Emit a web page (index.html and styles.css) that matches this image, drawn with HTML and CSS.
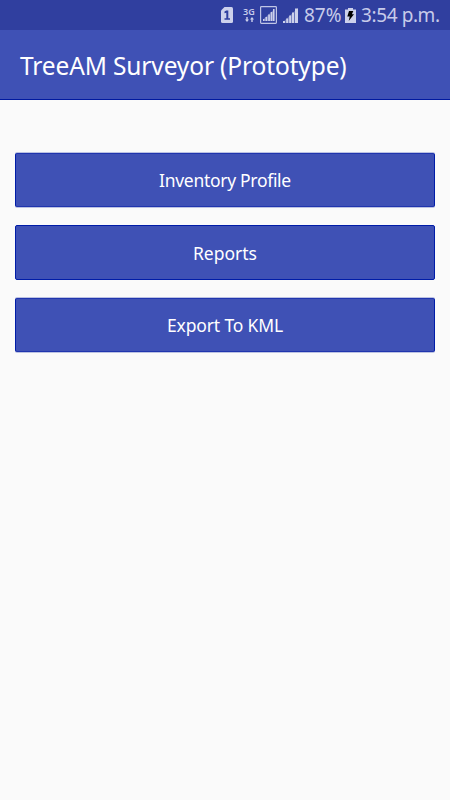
FILE: index.html
```
<!DOCTYPE html>
<html lang="en">
<head>
    <meta charset="UTF-8">
    <meta name="viewport" content="width=device-width, initial-scale=1.0">
    <title>TreeAM Surveyor</title>
    <link rel="stylesheet" href="styles.css">
</head>
<body>
    <div id="status-bar">
        <svg class="sim" width="12" height="16" viewBox="0 0 12 16">
            <path class="light" d="M3.5 0H10.5Q12 0 12 1.5V14.5Q12 16 10.5 16H1.5Q0 16 0 14.5V3.5Z"/>
            <path class="dark" d="M5.2 3.5H7.3V11.3H9V12.8H3.5V11.3H5.3V5.7L3.5 6.2V4.6Z"/>
        </svg>
        <div class="network">
            <span>3G</span>
            <svg width="9" height="6" viewBox="0 0 9 6">
                <path class="light" d="M1.3 0H2.7V2.5H4L2 5L0 2.5H1.3ZM6.3 5H7.7V2.5H9L7 0L5 2.5H6.3Z"/>
            </svg>
        </div>
        <svg class="signal-box" width="17" height="18" viewBox="0 0 17 18">
            <rect class="frame" x=".6" y=".6" width="15.8" height="16.8" rx=".8"/>
            <path class="light" d="M3 13H4.5V15H3ZM5.5 11H7.2V15H5.5ZM8.2 8.5H9.9V15H8.2ZM10.7 6H12.4V15H10.7ZM13 3H14.5V15H13Z"/>
            <path class="faint" d="M3 13.5L14.5 3V15H3Z"/>
        </svg>
        <svg class="signal" width="15" height="16" viewBox="0 0 15 16">
            <path class="light" d="M0 14H2V16H0ZM3.2 11.5H5.2V16H3.2ZM6.2 8.5H8.2V16H6.2ZM9 5.5H11V16H9ZM12 1.5H15V16H12Z"/>
            <path class="faint" d="M0 15L15 1V16H0Z"/>
        </svg>
        <span class="percent">87%</span>
        <svg class="battery" width="11" height="15" viewBox="0 0 11 15">
            <path class="cell" d="M3 0H8V1.5H11V15H0V1.5H3Z"/>
            <path class="bolt" d="M4 3H8.3L6.9 6.2H9L3.7 13L4.7 8.5H2.3Z"/>
        </svg>
        <span class="time">3:54 p.m.</span>
    </div>
    <div id="header">
        <h1>TreeAM Surveyor (Prototype)</h1>
    </div>
    <div id="menu">
        <button class="inventory"><span>Inventory Profile</span></button>
        <button class="reports"><span>Reports</span></button>
        <button class="export"><span>Export To KML</span></button>
    </div>
</body>
</html>
```
FILE: styles.css
```
body {
    font-family: "Noto Sans", sans-serif;
    margin: 0;
    height: 100vh;
    background-color: #fafafa;
    overflow: hidden;
}

#status-bar {
    display: flex;
    align-items: center;
    box-sizing: border-box;
    height: 30px;
    padding-left: 221px;
    background-color: #303f9f;
    color: #c7cbea;
    white-space: nowrap;
}

#status-bar svg {
    display: block;
    flex: none;
}

.light {
    fill: #cdd1ec;
}

.faint {
    fill: #cdd1ec;
    opacity: 0.35;
}

.dark {
    fill: #303f9f;
}

.frame {
    fill: none;
    stroke: #c0c5e6;
    stroke-width: 1.2;
}

.cell {
    fill: #cdd1ec;
}

.bolt {
    fill: #000;
}

.network {
    width: 12px;
    margin-left: 10px;
}

.network span {
    display: block;
    font-size: 9px;
    font-weight: 600;
    line-height: 8px;
}

.network svg {
    margin: 1px 0 0 2px;
}

.signal-box {
    margin-left: 5px;
}

.signal {
    margin-left: 6px;
}

.percent {
    width: 38px;
    margin-left: 6px;
    font-size: 19px;
    line-height: 28px;
}

.battery {
    margin: 1px 0 0 3px;
}

.time {
    margin-left: 5px;
    font-size: 19px;
    line-height: 28px;
    letter-spacing: -0.4px;
}

#header {
    display: flex;
    align-items: center;
    box-sizing: border-box;
    height: 70px;
    padding: 2px 20px 0;
    background-color: #3f51b5;
    border-bottom: 1px solid #0019a0;
}

#header h1 {
    margin: 0;
    color: #fff;
    font-size: 24.5px;
    font-weight: normal;
    letter-spacing: -0.13px;
    white-space: nowrap;
}

#menu {
    display: flex;
    flex-direction: column;
    gap: 18px;
    padding: 53px 15px 0;
}

#menu button {
    height: 54px;
    padding: 0;
    background-color: #3f51b5;
    color: #fff;
    border: 1px solid #001ca8;
    border-radius: 2px;
    font-family: inherit;
    font-size: 17.5px;
}

#menu .inventory,
#menu .export {
    border-top-color: #2035ae;
    border-bottom-color: #2035ae;
    box-shadow: 0 1px #bcc2e2, 0 -1px #bcc2e2;
}

#menu .inventory {
    letter-spacing: -0.3px;
}

#menu .reports {
    height: 55px;
}

#menu .export {
    letter-spacing: -0.15px;
}
```
